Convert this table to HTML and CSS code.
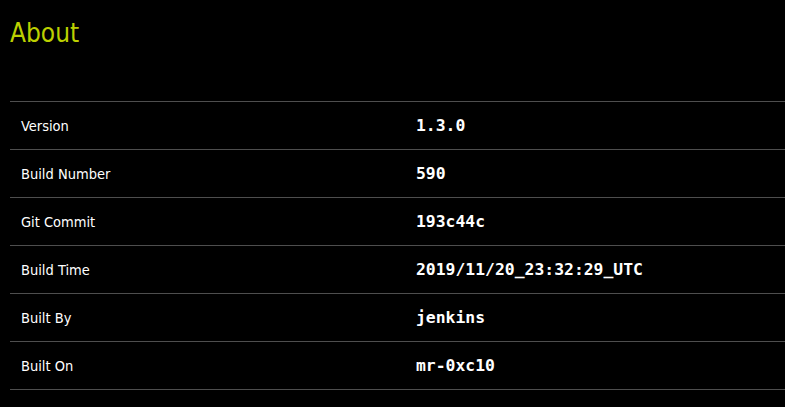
FILE: index.html
```html
<!DOCTYPE html>
<html>
<head>
<meta charset="utf-8">
<link rel="stylesheet" href="styles.css">
</head>
<body>
<div class="page">
  <h1 class="title">About</h1>
  <table class="info">
    <tbody>
      <tr><td class="label">Version</td><td class="value">1.3.0</td></tr>
      <tr><td class="label">Build Number</td><td class="value">590</td></tr>
      <tr><td class="label">Git Commit</td><td class="value">193c44c</td></tr>
      <tr><td class="label">Build Time</td><td class="value">2019/11/20_23:32:29_UTC</td></tr>
      <tr><td class="label">Built By</td><td class="value">jenkins</td></tr>
      <tr><td class="label">Built On</td><td class="value">mr-0xc10</td></tr>
    </tbody>
  </table>
</div>
</body>
</html>
```

FILE: styles.css
```css
html, body {
  margin: 0;
  padding: 0;
  background: #000;
  overflow: hidden;
}
.page {
  padding: 0 0 0 10px;
}
.title {
  margin: 0;
  padding-top: 17px;
  height: 101px;
  box-sizing: border-box;
  font-family: "DejaVu Sans Condensed", "DejaVu Sans", sans-serif;
  font-weight: normal;
  font-size: 26px;
  line-height: 32px;
  color: #bcd000;
}
.info {
  border-collapse: collapse;
  width: 800px;
  border-top: 1px solid #4e4e4e;
}
.info td {
  height: 47px;
  padding: 0 11px;
  border-bottom: 1px solid #4e4e4e;
  color: #fff;
  vertical-align: middle;
}
.label {
  width: 373px;
  font-family: "DejaVu Sans Condensed", "DejaVu Sans", sans-serif;
  font-size: 14.5px;
  font-weight: 500;
}
.value {
  font-family: "DejaVu Sans Mono", monospace;
  font-size: 16.4px;
  font-weight: bold;
  padding-top: 2px;
}
```
